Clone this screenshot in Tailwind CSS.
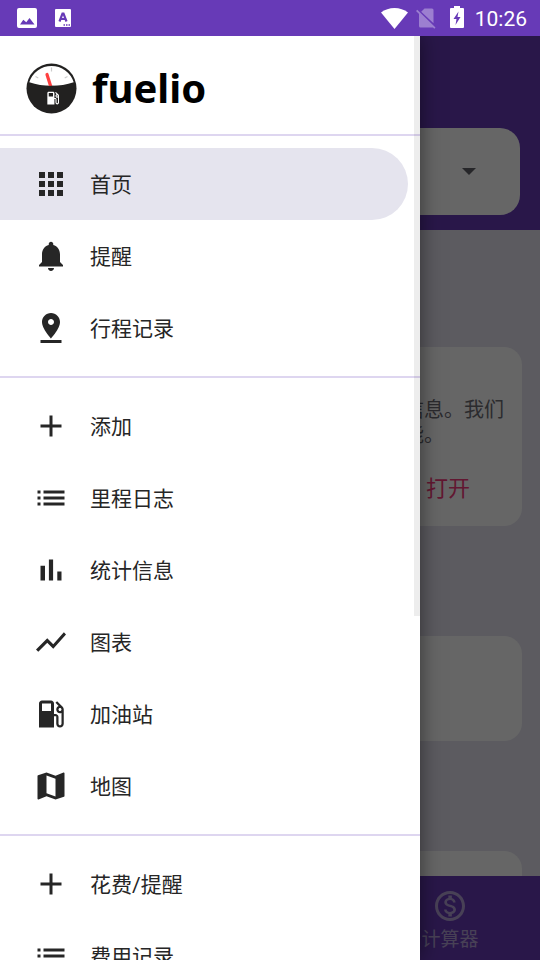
<!DOCTYPE html>
<html lang="zh-CN">
<head>
<meta charset="utf-8">
<meta name="viewport" content="width=device-width, initial-scale=1">
<title>Fuelio</title>
<script src="https://cdn.jsdelivr.net/npm/@tailwindcss/browser@4"></script>
</head>
<body class="bg-[#e6e4f0] font-['Roboto','Noto_Sans_CJK_SC',sans-serif] text-[21px] leading-6 text-[#262626]">
<!-- Shared symbols -->
<svg class="hidden" aria-hidden="true">
  <symbol id="add" viewBox="0 0 24 24"><path d="M19 13h-6v6h-2v-6H5v-2h6V5h2v6h6v2z"/></symbol>
  <symbol id="list" viewBox="0 0 24 24"><path d="M3 13h2v-2H3v2zm0 4h2v-2H3v2zm0-8h2V7H3v2zm4 4h14v-2H7v2zm0 4h14v-2H7v2zM7 7v2h14V7H7z"/></symbol>
  <symbol id="gas" viewBox="0 0 24 24"><path d="M19.77 7.23l.01-.01-3.72-3.72L15 4.56l2.11 2.11c-.94.36-1.61 1.26-1.61 2.33 0 1.38 1.12 2.5 2.5 2.5.36 0 .69-.08 1-.21v7.21c0 .55-.45 1-1 1s-1-.45-1-1V14c0-1.1-.9-2-2-2h-1V5c0-1.1-.9-2-2-2H6c-1.1 0-2 .9-2 2v16h10v-7.5h1.5v5c0 1.38 1.12 2.5 2.5 2.5s2.5-1.12 2.5-2.5V9c0-.69-.28-1.32-.73-1.77zM12 10H6V5h6v5zm6 0c-.55 0-1-.45-1-1s.45-1 1-1 1 .45 1 1-.45 1-1 1z"/></symbol>
</svg>

<div class="flex h-screen flex-col overflow-hidden">
  <!-- Status bar -->
  <div class="flex h-9 shrink-0 items-center bg-[#673ab7] pr-[13px] pl-[17px] text-white">
    <svg class="h-5 w-5" viewBox="0 0 20 20" fill="currentColor"><path fill-rule="evenodd" d="M2 0h16a2 2 0 0 1 2 2v16a2 2 0 0 1-2 2H2a2 2 0 0 1-2-2V2a2 2 0 0 1 2-2zM3 16.500h14.500l-5-6.500-3.200 4.200-3-2.400z"/></svg>
    <svg class="ml-[18px] h-[18px] w-4" viewBox="0 0 16 18"><rect width="16" height="18" rx="1" fill="#fff"/><path d="M4.500 12.500 7.500 4.500h1L11.500 12.500M5.500 10h5" fill="none" stroke="#673ab7" stroke-width="2.200"/><path d="M8.500 15.200h1.500v1.500H8.500zM11 15.200h1.500v1.500H11zM13.500 15.200H15v1.500h-1.500z" fill="#673ab7"/></svg>
    <svg class="ml-auto h-[21px] w-[27px]" viewBox="0 0 27 21" fill="currentColor"><path d="M13.500 21 0 4.500C3.800 1.500 8.500 0 13.500 0S23.200 1.500 27 4.500z"/></svg>
    <svg class="ml-2 h-[21px] w-5 opacity-35" viewBox="0 0 20 21" fill="currentColor"><path d="M8.500 0.500H16a1.500 1.500 0 0 1 1.500 1.500v13.200L5.200 3.800zM3 5.800 17.200 19.500H4.500A1.500 1.500 0 0 1 3 18zM1.300 1.800 19.500 19.500l-1.200 1.200L0 3z"/></svg>
    <svg class="mb-0.5 ml-[14px] h-[22px] w-3.5" viewBox="0 0 14 22" fill="currentColor"><path fill-rule="evenodd" d="M4 0h6v2h3a1 1 0 0 1 1 1v18a1 1 0 0 1-1 1H1a1 1 0 0 1-1-1V3a1 1 0 0 1 1-1h3zM8.500 5.500 3.500 13h3L5.500 19 10.500 11h-3z"/></svg>
    <time class="ml-[11px] pt-0.5">10:26</time>
  </div>

  <div class="relative flex min-h-0 flex-1 flex-col overflow-hidden">
    <!-- Page behind the drawer -->
    <main class="min-h-0 flex-1 overflow-hidden">
      <header class="bg-[#673ab7] px-5 pt-[92px] pb-[15px]">
        <button class="flex h-[87px] w-full items-center justify-end rounded-[20px] bg-white pr-11" aria-label="选择车辆">
          <svg class="h-[7px] w-3.5" viewBox="0 0 14 7" fill="#5f5f66"><path d="M0 0h14L7 7z"/></svg>
        </button>
      </header>
      <section class="mx-[18px] mt-[117px] flex h-[179px] flex-col items-end rounded-[18px] bg-white pt-[51px] pr-[18px]">
        <p class="text-[20px] leading-[25px] text-[#6c6c74]">信息。我们<br>能。</p>
        <button class="mt-[29px] mr-[34px] text-[22px] text-[#f53a7b]">打开</button>
      </section>
      <section class="mx-[18px] mt-[110px] h-[105px] rounded-[18px] bg-white"></section>
      <section class="mx-[18px] mt-[110px] h-[105px] rounded-[18px] bg-white"></section>
    </main>
    <nav class="grid h-[84px] shrink-0 grid-cols-3 bg-[#673ab7] text-[#b5a4d8]">
      <a href="#" class="col-start-3 flex flex-col items-center gap-1 pt-3 text-[19px]">
        <svg class="h-9 w-9" viewBox="0 0 24 24" fill="currentColor"><path d="M12 2C6.480 2 2 6.480 2 12s4.480 10 10 10 10-4.480 10-10S17.520 2 12 2zm0 18c-4.410 0-8-3.590-8-8s3.590-8 8-8 8 3.590 8 8-3.590 8-8 8zm.31-8.860c-1.770-.45-2.340-.94-2.340-1.670 0-.84.79-1.430 2.100-1.430 1.380 0 1.900.66 1.940 1.640h1.710c-.05-1.340-.87-2.570-2.490-2.970V5H10.900v1.690c-1.510.32-2.720 1.300-2.720 2.810 0 1.790 1.490 2.690 3.660 3.210 1.950.46 2.340 1.150 2.340 1.870 0 .53-.39 1.390-2.100 1.390-1.600 0-2.230-.72-2.320-1.640H8.040c.1 1.700 1.360 2.660 2.860 2.970V19h2.340v-1.670c1.520-.29 2.720-1.160 2.730-2.770-.01-2.200-1.900-2.960-3.660-3.420z"/></svg>
        计算器
      </a>
    </nav>
    <div class="absolute inset-0 bg-black/60"></div>

    <!-- Navigation drawer -->
    <aside class="absolute inset-y-0 left-0 right-30 bg-white shadow-[0_0_20px_rgba(0,0,0,0.5)]">
      <div class="h-full overflow-hidden">
        <div class="flex h-[98px] items-center gap-[15px] pt-1.5 pl-[26px]">
          <svg class="h-[51px] w-[51px]" viewBox="0 0 51 51">
            <circle cx="25.500" cy="25.500" r="25" fill="#222120"/>
            <path d="M3.300 19.300A23.300 23.300 0 0 1 47.700 19.300C34 24 17 24 3.300 19.300z" fill="#fff"/>
            <path d="M25.500 4.500v4M9.500 13.500l2.800 1.500M41.500 13.500l-2.800 1.500" stroke="#ccc" stroke-width="1.200"/>
            <path d="M21 11.500 24.600 23" stroke="#ff4040" stroke-width="3.200" stroke-linecap="round"/>
            <path d="M20 23.500q5.500-1.500 11 0v2H20z" fill="#222120"/>
            <use href="#gas" x="18.500" y="26.500" width="17" height="17" fill="#fff"/>
          </svg>
          <h1 class="font-['Noto_Sans'] text-[40px] leading-[50px] font-bold text-black">fuelio</h1>
        </div>
        <ul class="border-t-2 border-[#ded6f0] py-3 pr-3">
          <li><a href="#" aria-current="page" class="flex h-18 items-center gap-[21px] rounded-r-full bg-[#e5e4ee] pl-[33px]"><svg class="h-9 w-9" viewBox="0 0 24 24" fill="currentColor"><path d="M4 8h4V4H4v4zm6 12h4v-4h-4v4zm-6 0h4v-4H4v4zm0-6h4v-4H4v4zm6 0h4v-4h-4v4zm6-10v4h4V4h-4zm-6 4h4V4h-4v4zm6 6h4v-4h-4v4zm0 6h4v-4h-4v4z"/></svg><span class="pt-0.5">首页</span></a></li>
          <li><a href="#" class="flex h-18 items-center gap-[21px] pl-[33px]"><svg class="h-9 w-9" viewBox="0 0 24 24" fill="currentColor"><path d="M12 22c1.100 0 2-.9 2-2h-4c0 1.100.89 2 2 2zm6-6v-5c0-3.070-1.640-5.640-4.500-6.320V4c0-.83-.67-1.500-1.500-1.500s-1.500.67-1.500 1.500v.68C7.630 5.360 6 7.920 6 11v5l-2 2v1h16v-1l-2-2z"/></svg><span class="pt-0.5">提醒</span></a></li>
          <li><a href="#" class="flex h-18 items-center gap-[21px] pl-[33px]"><svg class="h-9 w-9" viewBox="0 0 24 24" fill="currentColor"><path d="M18 8c0-3.310-2.690-6-6-6S6 4.690 6 8c0 4.500 6 11 6 11s6-6.500 6-11zm-8 0c0-1.100.9-2 2-2s2 .9 2 2-.89 2-2 2c-1.100 0-2-.9-2-2zM5 20v2h14v-2H5z"/></svg><span class="pt-0.5">行程记录</span></a></li>
        </ul>
        <ul class="border-t-2 border-[#ded6f0] py-3 pr-3">
          <li><a href="#" class="flex h-18 items-center gap-[21px] pl-[33px]"><svg class="h-9 w-9" fill="currentColor"><use href="#add"/></svg><span class="pt-0.5">添加</span></a></li>
          <li><a href="#" class="flex h-18 items-center gap-[21px] pl-[33px]"><svg class="h-9 w-9" fill="currentColor"><use href="#list"/></svg><span class="pt-0.5">里程日志</span></a></li>
          <li><a href="#" class="flex h-18 items-center gap-[21px] pl-[33px]"><svg class="h-9 w-9" viewBox="0 0 24 24" fill="currentColor"><path d="M5 9.200h3V19H5V9.200zM10.600 5h2.800v14h-2.800V5zm5.600 8H19v6h-2.800v-6z"/></svg><span class="pt-0.5">统计信息</span></a></li>
          <li><a href="#" class="flex h-18 items-center gap-[21px] pl-[33px]"><svg class="h-9 w-9" viewBox="0 0 24 24" fill="currentColor"><path d="M3.500 18.490l6-6.010 4 4L22 6.920l-1.410-1.410-7.090 7.970-4-4L2 16.990z"/></svg><span class="pt-0.5">图表</span></a></li>
          <li><a href="#" class="flex h-18 items-center gap-[21px] pl-[33px]"><svg class="h-9 w-9" fill="currentColor"><use href="#gas"/></svg><span class="pt-0.5">加油站</span></a></li>
          <li><a href="#" class="flex h-18 items-center gap-[21px] pl-[33px]"><svg class="h-9 w-9" viewBox="0 0 24 24" fill="currentColor"><path d="M20.500 3l-.16.03L15 5.100 9 3 3.360 4.900c-.21.07-.36.25-.36.48V20.500c0 .28.22.5.5.5l.16-.03L9 18.900l6 2.100 5.640-1.900c.21-.07.36-.25.36-.48V3.500c0-.28-.22-.5-.5-.5zM15 19l-6-2.110V5l6 2.110V19z"/></svg><span class="pt-0.5">地图</span></a></li>
        </ul>
        <ul class="border-t-2 border-[#ded6f0] py-3 pr-3">
          <li><a href="#" class="flex h-18 items-center gap-[21px] pl-[33px]"><svg class="h-9 w-9" fill="currentColor"><use href="#add"/></svg><span class="pt-0.5">花费/提醒</span></a></li>
          <li><a href="#" class="flex h-18 items-center gap-[21px] pl-[33px]"><svg class="h-9 w-9" fill="currentColor"><use href="#list"/></svg><span class="pt-0.5">费用记录</span></a></li>
        </ul>
      </div>
      <div class="absolute top-0 right-0 h-[580px] w-1.5 bg-black/7"></div>
    </aside>
  </div>
</div>
</body>
</html>
